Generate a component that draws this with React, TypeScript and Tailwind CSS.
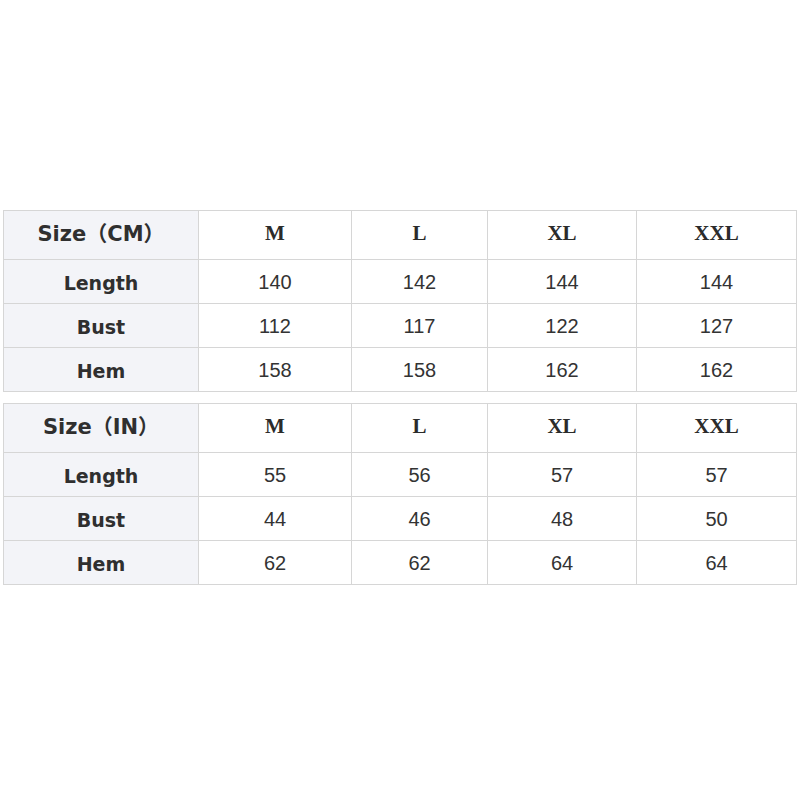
import React from 'react';

interface SizeTable {
  unit: string;
  rows: { label: string; values: string[] }[];
}

const sizes = ['M', 'L', 'XL', 'XXL'];

const tables: SizeTable[] = [
  {
    unit: 'CM',
    rows: [
      { label: 'Length', values: ['140', '142', '144', '144'] },
      { label: 'Bust', values: ['112', '117', '122', '127'] },
      { label: 'Hem', values: ['158', '158', '162', '162'] },
    ],
  },
  {
    unit: 'IN',
    rows: [
      { label: 'Length', values: ['55', '56', '57', '57'] },
      { label: 'Bust', values: ['44', '46', '48', '50'] },
      { label: 'Hem', values: ['62', '62', '64', '64'] },
    ],
  },
];

const labelFont = "font-['DejaVu_Sans','Noto_Sans_CJK_SC',sans-serif] font-bold text-[19px] text-[#2f2f2f]";
const headFont = "font-['DejaVu_Sans','Noto_Sans_CJK_SC',sans-serif] font-bold text-[21px] text-[#2f2f2f]";
const numFont = "font-['Liberation_Sans',Arial,sans-serif] text-[20px] text-[#333]";
const sizeFont = "font-['Liberation_Serif','Times_New_Roman',serif] font-bold text-[21px] text-[#2b2b2b]";

const Table: React.FC<{ table: SizeTable }> = ({ table }) => (
  <table className="table-fixed border-collapse w-[794px]">
    <colgroup>
      <col className="w-[195px]" />
      <col className="w-[153px]" />
      <col className="w-[136px]" />
      <col className="w-[149px]" />
      <col className="w-[160px]" />
    </colgroup>
    <tbody>
      <tr className="h-[49px]">
        <td className={`border border-[#d6d6d6] bg-[#f3f4f8] text-center ${headFont}`}>
          Size（{table.unit}）
        </td>
        {sizes.map((s) => (
          <td key={s} className={`border border-[#d6d6d6] text-center pb-[3px] ${sizeFont}`}>
            {s}
          </td>
        ))}
      </tr>
      {table.rows.map((row) => (
        <tr key={row.label} className="h-[44px]">
          <td className={`border border-[#d6d6d6] bg-[#f3f4f8] text-center pt-[3px] ${labelFont}`}>
            {row.label}
          </td>
          {row.values.map((v, i) => (
            <td key={i} className={`border border-[#d6d6d6] text-center ${numFont}`}>
              {v}
            </td>
          ))}
        </tr>
      ))}
    </tbody>
  </table>
);

export default function App() {
  return (
    <div className="w-[800px] h-[800px] bg-white pt-[210px] pl-[3px] flex flex-col gap-[11px]">
      {tables.map((t) => (
        <Table key={t.unit} table={t} />
      ))}
    </div>
  );
}
